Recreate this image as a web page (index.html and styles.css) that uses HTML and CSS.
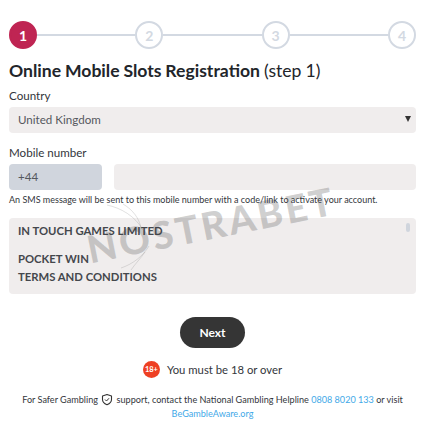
FILE: index.html
```html
<!DOCTYPE html>
<html lang="en">
<head>
<meta charset="utf-8">
<title>Online Mobile Slots Registration</title>
<link rel="stylesheet" href="styles.css">
</head>
<body>
<main class="page">
  <ol class="steps">
    <li class="step step-active">1</li>
    <li class="line"></li>
    <li class="step">2</li>
    <li class="line"></li>
    <li class="step">3</li>
    <li class="line"></li>
    <li class="step">4</li>
  </ol>
  <h1 class="title"><strong>Online Mobile Slots Registration</strong> (step 1)</h1>
  <div class="label label-country">Country</div>
  <div class="select"><span>United Kingdom</span><span class="caret"></span></div>
  <div class="label label-mobile">Mobile number</div>
  <div class="phone">
    <div class="prefix">+44</div>
    <div class="number"></div>
  </div>
  <p class="hint">An SMS message will be sent to this mobile number with a code/link to activate your account.</p>
  <div class="terms">
    <p>IN TOUCH GAMES LIMITED</p>
    <p class="terms-gap">POCKET WIN</p>
    <p class="terms-last">TERMS AND CONDITIONS</p>
    <span class="thumb"></span>
  </div>
  <div class="actions"><button class="next" type="button">Next</button></div>
  <div class="age"><span class="badge">18+</span><span>You must be 18 or over</span></div>
  <p class="footer">For Safer Gambling
    <svg class="shield" viewBox="0 0 24 24" width="12" height="13" aria-hidden="true"><path d="M12 2 L21 5 V12 C21 17 17 20.5 12 22.5 C7 20.5 3 17 3 12 V5 Z" fill="none" stroke="#333" stroke-width="2.2" stroke-linejoin="round"/><path d="M8 12 L11 15 L16 9.5" fill="none" stroke="#333" stroke-width="2"/></svg>
    support, contact the National Gambling Helpline <a href="#">0808 8020 133</a> or visit <a href="#">BeGambleAware.org</a></p>
  <div class="watermark">NOSTRABET</div>
  <svg class="swoosh" viewBox="0 0 50 70" width="50" height="70" aria-hidden="true"><path d="M2 3 C16 6 30 14 38 28 M18 2 C28 8 34 16 36 26 M16 66 C28 62 38 54 44 44 M26 68 C30 62 36 56 40 50" fill="none" stroke="#777" stroke-opacity=".22" stroke-width="1"/></svg>
</main>
</body>
</html>
```
FILE: styles.css
```css
* { box-sizing: border-box; }
html, body { margin: 0; background: #fff; }
body { font-family: Lato, "Open Sans", sans-serif; color: #33363b; }
.page { position: relative; width: 425px; height: 441px; padding: 21px 9px 0; overflow: hidden; }
.steps { display: flex; align-items: center; margin: 0; padding: 0; list-style: none; }
.step { width: 28px; height: 28px; flex: none; border: 2px solid #d3d9e2; border-radius: 50%; color: #d3d9e2; font-size: 14px; font-weight: 700; display: flex; align-items: center; justify-content: center; }
.step-active { background: #bf2553; border-color: #bf2553; color: #fff; }
.line { flex: 1; height: 2px; background: #d3d9e2; }
.title { margin: 11px 0 0; font-size: 17.6px; line-height: 22px; font-weight: 400; color: #22252a; word-spacing: -0.5px; }
.title strong { font-weight: 700; }
.label { font-size: 11.6px; line-height: 16px; color: #33363b; }
.label-country { margin-top: 6px; }
.label-mobile { margin-top: 12px; }
.select { margin-top: 3px; height: 26px; padding: 0 9px 2px; background: #f0eded; border-radius: 4px; font-size: 11.6px; color: #55585e; display: flex; align-items: center; justify-content: space-between; }
.caret { width: 0; height: 0; margin-right: -4px; border-left: 3.5px solid transparent; border-right: 3.5px solid transparent; border-top: 6px solid #333; }
.phone { margin-top: 3px; display: flex; gap: 12px; height: 26px; }
.prefix { width: 93px; padding: 0 9px; background: #d0d5dd; border-radius: 4px; font-size: 11.6px; line-height: 26px; color: #55585e; }
.number { flex: 1; background: #f0eded; border-radius: 4px; }
.hint { margin: 3px 0 0; font-size: 9px; line-height: 13px; color: #33363b; white-space: nowrap; }
.terms { position: relative; margin-top: 12px; height: 76px; padding: 5px 9px; background: #f0eded; border-radius: 4px; font-size: 11.3px; font-weight: 700; color: #44474c; }
.terms p { margin: 0; line-height: 15px; }
.terms .terms-gap { margin-top: 13px; }
.terms .terms-last { margin-top: 3px; }
.thumb { position: absolute; right: 6px; top: 5px; width: 4px; height: 9px; border-radius: 2px; background: #d0d5dd; }
.actions { margin-top: 23px; display: flex; justify-content: center; }
.next { width: 65px; height: 31px; border: 0; border-radius: 16px; background: #353535; color: #fff; font-family: inherit; font-size: 12px; font-weight: 700; }
.age { margin-top: 13px; display: flex; justify-content: center; align-items: center; gap: 7px; font-size: 11.3px; line-height: 17px; color: #33363b; }
.badge { width: 17px; height: 17px; border-radius: 50%; background: #ee4023; color: #fff; font-size: 7.5px; font-weight: 700; display: flex; align-items: center; justify-content: center; }
.footer { margin: 15px 0 0; font-size: 9.1px; line-height: 14px; text-align: center; color: #33363b; }
.footer a { color: #3fa9e8; text-decoration: none; }
.shield { vertical-align: -3px; margin: 0 1px; }
.watermark { position: absolute; left: 83px; top: 204px; width: 256px; text-align: center; font-size: 38px; line-height: 40px; font-weight: 900; letter-spacing: 3px; color: rgba(70,70,70,.25); transform: rotate(-11.3deg); white-space: nowrap; pointer-events: none; }
.swoosh { position: absolute; left: 105px; top: 202px; pointer-events: none; }
```
